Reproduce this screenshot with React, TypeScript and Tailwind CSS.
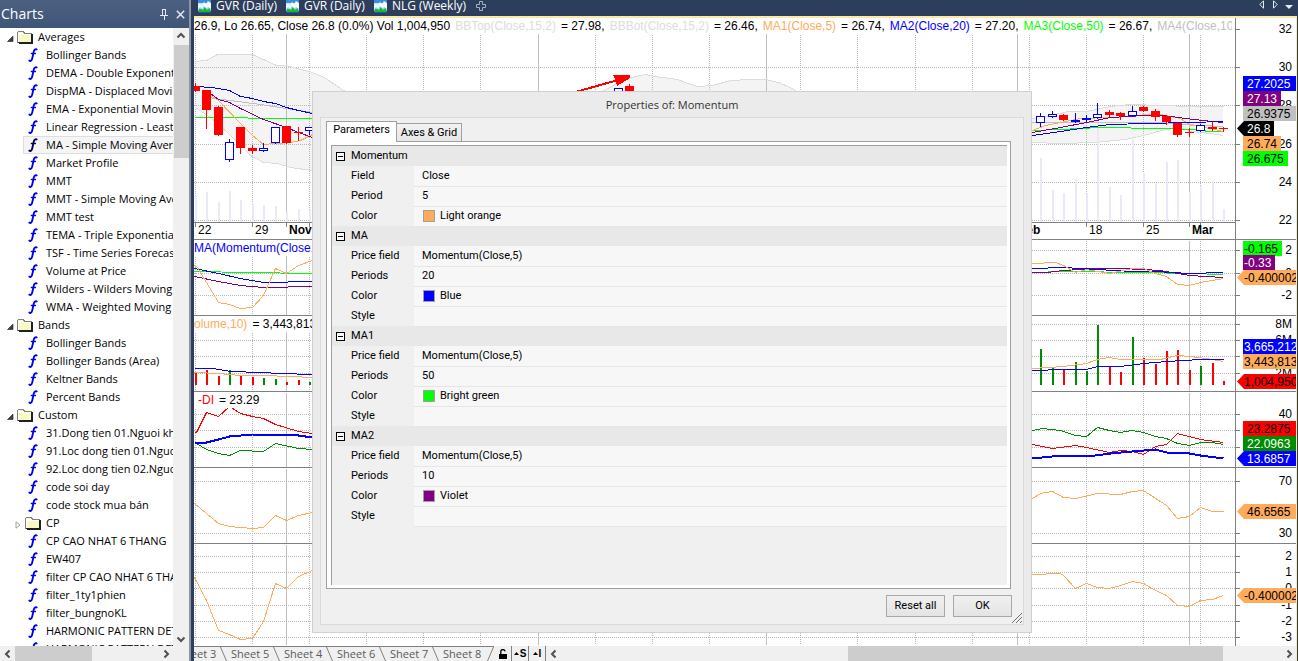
import React from "react";

type Series = { color: string; width?: number; points: string };
type Bar = [x: number, top: number, color?: string];
type Tag = { y: number; text: string; look: string; arrow?: boolean };
type AxisLabel = { y: number; text: string };
type LegendPart = { text: string; look: string };

type Pane = {
  name: string;
  top: number;
  height: number;
  size: string;
  grid: number[];
  labels: AxisLabel[];
  tags: Tag[];
  series: Series[];
  legend: LegendPart[];
};

const PLOT_LEFT = 194;
const PLOT_WIDTH = 1042;

const WEEK_LINES = [195, 252, 309, 366, 423, 480, 595, 652, 709, 800, 857, 915, 972, 1029, 1086, 1143, 1200];
const MONTH_LINES = [286, 538, 766, 1017, 1189];

const ORANGE = "#ffab5c";
const BLUE = "#0000ff";
const GREEN = "#00ff00";
const VIOLET = "#800080";
const DARK_GREEN = "#008c00";
const RED = "#ff0000";

const PANES: Pane[] = [
  {
    name: "Price",
    top: 18,
    height: 222,
    size: "h-[222px] shrink-0",
    grid: [67, 105, 144, 182, 220],
    labels: [
      { y: 29, text: "32" },
      { y: 67, text: "30" },
      { y: 105, text: "28" },
      { y: 144, text: "26" },
      { y: 182, text: "24" },
      { y: 220, text: "22" },
    ],
    tags: [
      { y: 76, text: "27.2025", look: "bg-[#0000ff] text-white pl-1 pr-1" },
      { y: 91, text: "27.13", look: "bg-[#800080] text-white px-1" },
      { y: 106, text: "26.9375", look: "bg-[#c0c0c0] text-black px-1" },
      { y: 121, text: "26.8", look: "bg-black text-white pr-1", arrow: true },
      { y: 136, text: "26.74", look: "bg-[#ffab5c] text-black px-1" },
      { y: 151, text: "26.675", look: "bg-[#00ff00] text-black px-1" },
    ],
    series: [
      { color: "#c0c0c0", points: "206,92 212,98 230,100 260,104 286,108 312,112 1032,122 1160,122 1200,125 1223,126" },
      { color: GREEN, points: "194,117 247,117 248,118 312,118 1032,130 1060,129 1100,127 1160,128 1190,129 1210,131 1223,131" },
      { color: ORANGE, points: "206,92 218,100 240,123 252,135 263,144 275,143 290,142 300,140 312,134 1032,130 1045,125 1060,122 1080,118 1110,117 1130,116 1145,114 1160,114 1170,116 1180,118 1190,125 1200,126 1223,131" },
      { color: VIOLET, points: "206,90 218,99 229,102 240,108 263,119 286,127 298,132 312,137 1032,132 1060,127 1086,122 1110,117 1145,115 1163,115 1185,118 1212,121 1223,122" },
      { color: BLUE, points: "195,86 212,87 229,90 240,96 252,98 263,101 275,103 286,107 298,110 312,113 1032,135 1060,131 1086,127 1110,124 1145,123 1190,122 1223,121" },
    ],
    legend: [
      { text: "26.9, Lo 26.65, Close 26.8 (0.0%) Vol 1,004,950", look: "text-black" },
      { text: "BBTop(Close,15,2)", look: "text-[#dcdcdc]" },
      { text: "= 27.98,", look: "text-black" },
      { text: "BBBot(Close,15,2)", look: "text-[#dcdcdc]" },
      { text: "= 26.46,", look: "text-black" },
      { text: "MA1(Close,5)", look: "text-[#ffab5c]" },
      { text: "= 26.74,", look: "text-black" },
      { text: "MA2(Close,20)", look: "text-[#0000ff]" },
      { text: "= 27.20,", look: "text-black" },
      { text: "MA3(Close,50)", look: "text-[#00ff00]" },
      { text: "= 26.67,", look: "text-black" },
      { text: "MA4(Close,100)", look: "text-[#c0c0c0]" },
    ],
  },
  {
    name: "Momentum averages",
    top: 240,
    height: 76,
    size: "h-[76px] shrink-0",
    grid: [250, 273, 295],
    labels: [
      { y: 250, text: "2" },
      { y: 273, text: "0" },
      { y: 295, text: "-2" },
    ],
    tags: [
      { y: 241, text: "-0.165", look: "bg-[#00ff00] text-black pl-px pr-1" },
      { y: 255, text: "-0.33", look: "bg-[#800080] text-white pl-px pr-1" },
      { y: 270, text: "-0.400002", look: "bg-[#ffab5c] text-black", arrow: true },
    ],
    series: [
      { color: GREEN, points: "194,271 247,272 312,273 1032,272 1063,271 1086,271 1120,272 1143,272 1189,273 1223,274" },
      { color: VIOLET, points: "194,276 218,281 240,285 263,287 312,286 1046,272 1063,270 1097,268 1120,268 1143,269 1160,270 1189,275 1223,277" },
      { color: BLUE, points: "194,268 218,273 240,278 263,282 312,281 1032,268 1063,267 1097,269 1132,271 1155,271 1189,273 1223,272" },
      { color: ORANGE, points: "194,265 197,267 206,282 218,302 229,304 240,308 252,307 263,295 275,268 286,273 298,265 312,260 1032,263 1055,262 1063,265 1075,272 1086,269 1109,273 1132,268 1143,268 1155,273 1166,276 1177,284 1189,285 1200,282 1212,280 1223,278" },
    ],
    legend: [{ text: "MA(Momentum(Close,5),20)", look: "text-[#0000ff]" }],
  },
  {
    name: "Volume",
    top: 316,
    height: 76,
    size: "h-[76px] shrink-0",
    grid: [324, 340, 356, 373],
    labels: [
      { y: 324, text: "8M" },
      { y: 340, text: "6M" },
      { y: 356, text: "4M" },
      { y: 373, text: "2M" },
    ],
    tags: [
      { y: 339, text: "3,665,212", look: "bg-[#0000ff] text-white pl-px" },
      { y: 354, text: "3,443,813", look: "bg-[#ffab5c] text-black pl-px" },
      { y: 374, text: "1,004,950", look: "bg-[#ff0000] text-black", arrow: true },
    ],
    series: [
      { color: ORANGE, points: "194,372 218,373 240,375 263,375 290,376 312,377 1032,368 1063,366 1086,363 1097,359 1109,357 1120,359 1143,359 1160,359 1177,355 1189,356 1205,358 1223,361" },
      { color: BLUE, points: "194,368 212,368 230,371 260,372 280,373 312,374 1032,370 1063,369 1086,369 1097,366 1120,366 1143,363 1166,361 1200,359 1223,359" },
    ],
    legend: [
      { text: "olume,10)", look: "text-[#ffab5c]" },
      { text: "= 3,443,813", look: "text-black" },
    ],
  },
  {
    name: "Directional movement",
    top: 392,
    height: 76,
    size: "h-[76px] shrink-0",
    grid: [414, 430, 447],
    labels: [{ y: 414, text: "40" }],
    tags: [
      { y: 421, text: "23.2875", look: "bg-[#ff0000] text-black px-1" },
      { y: 436, text: "22.0963", look: "bg-[#008c00] text-white px-1" },
      { y: 451, text: "13.6857", look: "bg-[#0000ff] text-white pl-[10px]", arrow: true },
    ],
    series: [
      { color: RED, points: "194,432 196,432 206,412 218,416 229,406 240,413 252,416 263,418 275,424 298,431 312,433 1032,444 1052,448 1075,445 1086,447 1109,452 1120,450 1132,451 1143,454 1155,446 1166,444 1177,433 1200,439 1223,442" },
      { color: DARK_GREEN, points: "196,443 206,449 218,453 229,455 240,450 263,451 275,443 298,448 312,449 1032,430 1042,428 1060,430 1075,435 1086,436 1097,427 1109,430 1120,432 1132,430 1143,432 1155,436 1166,438 1177,443 1189,445 1200,442 1212,442 1223,444" },
      { color: BLUE, width: 2, points: "194,442 206,442 218,439 229,436 252,434 286,434 298,435 312,437 1032,458 1052,456 1095,455 1110,453 1132,451 1155,449 1166,452 1189,453 1200,455 1223,458" },
    ],
    legend: [
      { text: "-DI", look: "pl-1 text-[#ff0000]" },
      { text: "= 23.29", look: "text-black" },
    ],
  },
  {
    name: "Relative strength",
    top: 468,
    height: 76,
    size: "h-[76px] shrink-0",
    grid: [481, 533],
    labels: [
      { y: 481, text: "70" },
      { y: 533, text: "30" },
    ],
    tags: [{ y: 504, text: "46.6565", look: "bg-[#ffab5c] text-black pl-[10px]", arrow: true }],
    series: [
      { color: ORANGE, points: "194,503 206,513 218,523 229,526 252,528 263,527 275,515 286,520 298,515 312,512 1032,498 1040,493 1052,491 1063,497 1075,498 1097,493 1120,494 1132,491 1143,490 1166,505 1177,518 1189,516 1200,507 1212,511 1223,511" },
    ],
    legend: [],
  },
  {
    name: "Momentum",
    top: 544,
    height: 102,
    size: "flex-1",
    grid: [556, 572, 588, 605, 621, 637],
    labels: [
      { y: 556, text: "2" },
      { y: 572, text: "1" },
      { y: 588, text: "0" },
      { y: 605, text: "-1" },
      { y: 621, text: "-2" },
      { y: 637, text: "-3" },
    ],
    tags: [{ y: 588, text: "-0.400002", look: "bg-[#ffab5c] text-black", arrow: true }],
    series: [
      { color: ORANGE, points: "194,577 206,600 218,630 229,634 240,639 252,638 263,621 275,583 286,588 298,576 312,570 1032,574 1060,573 1063,575 1075,588 1086,583 1097,587 1109,588 1120,585 1132,581 1143,583 1155,590 1166,595 1177,605 1189,606 1200,600 1212,599 1223,595" },
    ],
    legend: [],
  },
];

const BAND_TOP =
  "194,61 206,60 217,54 252,54 276,65 286,65 300,69 309,71 324,77 343,90 350,94 600,92 615,84 628,78 635,76 645,74 655,76 677,79 685,82 697,86 712,85 730,80 750,79 765,79 778,82 790,87 800,93 1032,118 1045,116 1068,111 1086,111 1110,106 1130,104 1160,105 1190,106 1223,106";
const BAND_BOTTOM =
  "1223,135 1210,133 1190,131 1180,127 1165,129 1143,135 1125,139 1095,142 1060,143 1032,142 312,170 290,167 277,163 263,162 250,155 240,145 227,132 210,117 195,107";

const PALE_VOLUME: Bar[] = [
  [195, 196], [206, 192], [218, 202], [229, 191], [240, 200], [252, 203], [263, 205], [275, 206], [286, 212],
  [298, 209], [309, 210], [1040, 158], [1052, 190], [1063, 193], [1075, 179], [1086, 194], [1097, 122],
  [1109, 187], [1120, 195], [1132, 139], [1143, 173], [1155, 183], [1166, 162], [1177, 160], [1189, 192],
  [1200, 186], [1212, 181], [1223, 209],
];

const VOLUME: Bar[] = [
  [195, 372, RED], [206, 370, RED], [218, 376, RED], [229, 370, DARK_GREEN], [240, 375, RED], [252, 377, RED],
  [263, 378, DARK_GREEN], [275, 379, DARK_GREEN], [286, 382, RED], [298, 380, RED], [309, 382, DARK_GREEN],
  [1040, 349, DARK_GREEN], [1052, 368, DARK_GREEN], [1063, 369, RED], [1075, 362, DARK_GREEN],
  [1086, 371, DARK_GREEN], [1097, 325, DARK_GREEN], [1109, 366, RED], [1120, 372, RED], [1132, 337, DARK_GREEN],
  [1143, 358, RED], [1155, 364, RED], [1166, 351, RED], [1177, 350, RED], [1189, 370, RED],
  [1200, 366, DARK_GREEN], [1212, 363, RED], [1223, 381, RED],
];

/* x, high, body top, body bottom, low, rising */
const CANDLES: [number, number, number, number, number, boolean][] = [
  [195, 83, 86, 91, 91, false], [206, 90, 90, 110, 128, false], [218, 106, 107, 135, 135, false],
  [229, 139, 142, 160, 161, true], [240, 127, 127, 148, 153, false], [252, 145, 148, 151, 153, false],
  [263, 143, 148, 151, 151, true], [275, 127, 127, 143, 143, true], [286, 126, 126, 143, 143, false],
  [298, 127, 132, 133, 140, false], [309, 127, 127, 131, 134, true], [618, 88, 88, 96, 96, true],
  [629, 84, 86, 96, 96, false], [1040, 113, 116, 123, 126, true], [1052, 111, 114, 117, 117, true],
  [1063, 114, 115, 120, 120, false], [1075, 113, 120, 122, 122, true], [1086, 115, 118, 120, 121, true],
  [1097, 103, 114, 118, 118, true], [1109, 110, 112, 115, 116, false], [1120, 112, 113, 116, 119, false],
  [1132, 106, 111, 116, 116, true], [1143, 106, 107, 111, 111, false], [1155, 109, 111, 117, 120, false],
  [1166, 115, 116, 122, 124, false], [1177, 122, 123, 135, 136, false], [1189, 128, 132, 133, 136, false],
  [1200, 124, 125, 131, 131, true], [1212, 122, 127, 129, 130, false], [1223, 127, 128, 129, 131, false],
];

const DATES: { x: number; text: string; bold?: boolean }[] = [
  { x: 198, text: "22" },
  { x: 255, text: "29" },
  { x: 289, text: "Nov", bold: true },
  { x: 1019, text: "Feb", bold: true },
  { x: 1089, text: "18" },
  { x: 1146, text: "25" },
  { x: 1192, text: "Mar", bold: true },
];

function Plot({ pane }: { pane: Pane }) {
  const bottom = pane.top + pane.height - 1;
  const isPrice = pane.name === "Price";
  const gridEnd = isPrice ? 222 : bottom;
  return (
    <svg
      className="block h-full w-full"
      viewBox={`${PLOT_LEFT} ${pane.top} ${PLOT_WIDTH} ${pane.height}`}
      preserveAspectRatio="none"
      shapeRendering="crispEdges"
      fill="none"
      role="img"
      aria-label={`${pane.name} chart`}
    >
      {isPrice && <polygon points={`${BAND_TOP} ${BAND_BOTTOM}`} fill="#f4f4f4" />}
      {WEEK_LINES.map((x) => (
        <path key={x} d={`M${x + 0.5} ${pane.top + 1}V${gridEnd}`} stroke="#b8b8b8" strokeDasharray="1 1" />
      ))}
      {MONTH_LINES.map((x) => (
        <path key={x} d={`M${x + 0.5} ${pane.top + 1}V${gridEnd}`} stroke="#c0c0c0" />
      ))}
      {pane.grid.map((y) => (
        <path key={y} d={`M194 ${y + 0.5}H1235`} stroke="#b8b8b8" strokeDasharray="1 1" />
      ))}
      {isPrice && (
        <>
          <g transform="translate(.5 .5)" stroke="#dcdcdc">
            <polyline points={BAND_TOP} />
            <polyline points={BAND_BOTTOM} />
          </g>
          {PALE_VOLUME.map(([x, y]) => (
            <rect key={x} x={x} y={y} width="2" height={222 - y} fill="#e9e9f8" />
          ))}
          <path d="M194 222.5H1235" stroke="#808080" />
          {[...WEEK_LINES, ...MONTH_LINES].map((x) => (
            <path key={x} d={`M${x + 0.5} 223V227`} stroke="#808080" />
          ))}
        </>
      )}
      {pane.name === "Volume" &&
        VOLUME.map(([x, y, color]) => <rect key={x} x={x} y={y} width="2" height={385 - y} fill={color} />)}
      <g transform="translate(.5 .5)">
        {pane.series.map((s) => (
          <polyline key={s.points} points={s.points} stroke={s.color} strokeWidth={s.width ?? 1} />
        ))}
      </g>
      {isPrice && (
        <>
          {CANDLES.map(([x, high, open, close, low, rising]) => (
            <g key={x} stroke={rising ? BLUE : RED}>
              <path d={`M${x + 0.5} ${high}V${low + 1}`} />
              <rect
                x={x - 3.5}
                y={open + 0.5}
                width="8"
                height={Math.max(close - open - 1, 0.1)}
                fill={rising ? "#ffffff" : RED}
              />
            </g>
          ))}
          <path d="M572 93L618 80" stroke={RED} strokeWidth="2" />
          <path d="M613 75H630V78L617 86L616 81Z" fill={RED} />
        </>
      )}
      {bottom < 645 && <path d={`M194 ${bottom + 0.5}H1236`} stroke="#808080" />}
      <path d={`M1235.5 ${pane.top}V${bottom + 1}`} stroke="#808080" />
    </svg>
  );
}

function Axis({ pane }: { pane: Pane }) {
  return (
    <div
      className={`relative w-[60px] shrink-0 overflow-hidden bg-white ${
        pane.name === "Momentum" ? "" : "border-b border-[#808080]"
      }`}
    >
      {[...(pane.name === "Price" ? [29] : []), ...pane.grid].map((y) => (
        <i key={y} className="absolute left-0 h-px w-1 bg-[#808080]" style={{ top: y - pane.top }} />
      ))}
      {pane.labels.map((l) => (
        <span key={l.y} className="absolute right-1 h-4 text-xs" style={{ top: l.y - pane.top - 8 }}>
          {l.text}
        </span>
      ))}
      {pane.tags.map((t) => (
        <span
          key={t.y}
          className={`absolute flex h-[15px] items-center text-xs whitespace-nowrap ${t.look} ${
            t.arrow
              ? `left-px [clip-path:polygon(0_50%,7px_0,100%_0,100%_100%,7px_100%)] ${
                  t.text === "26.8" ? "pl-[10px]" : "w-[59px]"
                } ${t.text.length > 8 ? "pl-[7px]" : ""}`
              : "left-[7px]"
          } ${!t.arrow && t.text.length > 6 ? "right-0" : ""}`}
          style={{ top: t.y - pane.top }}
        >
          {t.text}
        </span>
      ))}
    </div>
  );
}

function ChartPane({ pane }: { pane: Pane }) {
  return (
    <section className={`relative flex min-h-0 ${pane.size}`} aria-label={pane.name}>
      <div className="relative min-w-0 flex-1 overflow-hidden">
        <Plot pane={pane} />
        {pane.legend.length > 0 && (
          <div className="absolute top-0 right-1 left-0 overflow-hidden text-xs whitespace-nowrap">
            <p className="inline-flex h-4 gap-[5px] bg-white">
              {pane.legend.map((part) => (
                <span key={part.text} className={part.look}>
                  {part.text}
                </span>
              ))}
            </p>
          </div>
        )}
        {pane.name === "Price" &&
          DATES.map((d) => (
            <span
              key={d.x}
              className={`absolute bottom-[2px] text-xs ${d.bold ? "font-bold" : ""}`}
              style={{ left: `${((d.x - PLOT_LEFT) / PLOT_WIDTH) * 100}%` }}
            >
              {d.text}
            </span>
          ))}
      </div>
      <Axis pane={pane} />
    </section>
  );
}

type Node = { text: string; kind?: "open" | "closed"; selected?: boolean };

const TREE: Node[] = [
  { text: "Averages", kind: "open" },
  { text: "Bollinger Bands" },
  { text: "DEMA - Double Exponential" },
  { text: "DispMA - Displaced Moving" },
  { text: "EMA - Exponential Moving" },
  { text: "Linear Regression - Least" },
  { text: "MA - Simple Moving Average", selected: true },
  { text: "Market Profile" },
  { text: "MMT" },
  { text: "MMT - Simple Moving Average" },
  { text: "MMT test" },
  { text: "TEMA - Triple Exponential" },
  { text: "TSF - Time Series Forecast" },
  { text: "Volume at Price" },
  { text: "Wilders - Wilders Moving" },
  { text: "WMA - Weighted Moving" },
  { text: "Bands", kind: "open" },
  { text: "Bollinger Bands" },
  { text: "Bollinger Bands (Area)" },
  { text: "Keltner Bands" },
  { text: "Percent Bands" },
  { text: "Custom", kind: "open" },
  { text: "31.Dong tien 01.Nguoi khong" },
  { text: "91.Loc dong tien 01.Nguoi" },
  { text: "92.Loc dong tien 02.Nguoi" },
  { text: "code soi day" },
  { text: "code stock mua bán" },
  { text: "CP", kind: "closed" },
  { text: "CP CAO NHAT 6 THANG" },
  { text: "EW407" },
  { text: "filter CP CAO NHAT 6 THANG" },
  { text: "filter_1ty1phien" },
  { text: "filter_bungnoKL" },
  { text: "HARMONIC PATTERN DETECT" },
  { text: "HARMONIC PATTERN DETECT" },
];

function FormulaIcon({ dark }: { dark?: boolean }) {
  return (
    <svg className="h-[14px] w-[10px] shrink-0" viewBox="0 0 10 14" fill="none" stroke={dark ? "#000050" : "#0000e6"}>
      <path d="M9 2.2C8.2.6 6.3 1.2 5.8 3.4L4.2 10.6C3.7 12.9 2 13.6.8 12.2" strokeWidth="1.9" />
      <path d="M2.8 5.5H8" strokeWidth="1.4" />
    </svg>
  );
}

function FolderIcon() {
  return (
    <svg className="h-[14px] w-4 shrink-0" viewBox="0 0 16 14" shapeRendering="crispEdges">
      <path d="M.5 12.5V2.5L1.5 1.5H6.5L7.5 3.5H14.5V12.5Z" fill="#fafac4" stroke="#808080" />
      <path d="M1 3.5H6.5M1 4.5H14M1.5 4V12" stroke="#fff" />
      <path d="M14.5 4V12.5H1M15.5 4V13.5H2" fill="none" stroke="#202020" />
    </svg>
  );
}

function TreeRow({ node }: { node: Node }) {
  if (node.kind) {
    const open = node.kind === "open";
    return (
      <li className={`flex h-[18px] items-center ${open ? "pl-[7px]" : "pl-[15px]"}`}>
        <svg className="mt-1 h-2 w-[7px] shrink-0" viewBox="0 0 7 8">
          {open ? (
            <path d="M6 1V6.5H.5Z" fill="#404040" stroke="#202020" strokeWidth=".6" />
          ) : (
            <path d="M1 .8L5 4L1 7.2Z" fill="#fff" stroke="#a0a0a0" />
          )}
        </svg>
        <span className="ml-[3px] flex">
          <FolderIcon />
        </span>
        <span className="ml-[5px]">{node.text}</span>
      </li>
    );
  }
  return (
    <li
      className={`ml-[23px] flex h-[18px] items-center border whitespace-nowrap ${
        node.selected ? "border-r-0 border-[#dedede] bg-[#f5f5f5]" : "border-transparent"
      }`}
    >
      <span className="ml-1 flex">
        <FormulaIcon dark={node.selected} />
      </span>
      <span className="ml-2">{node.text}</span>
    </li>
  );
}

const CHEVRONS = {
  up: "M1.5 6.5L5 3L8.5 6.5",
  down: "M1.5 3.5L5 7L8.5 3.5",
  left: "M6.5 1.5L3 5L6.5 8.5",
  right: "M3.5 1.5L7 5L3.5 8.5",
};

function ScrollButton({ dir, label }: { dir: keyof typeof CHEVRONS; label: string }) {
  return (
    <button type="button" aria-label={label} className="flex size-[15px] shrink-0 items-center justify-center">
      <svg className="size-[10px]" viewBox="0 0 10 10" fill="none" stroke="#505050" strokeWidth="2">
        <path d={CHEVRONS[dir]} />
      </svg>
    </button>
  );
}

function Sidebar() {
  return (
    <aside className="flex w-[191px] shrink-0 flex-col border-r-2 border-[#8c95a6] bg-white">
      <header className="flex h-7 shrink-0 items-center bg-linear-to-b from-[#4d6082] to-[#3f5578] pr-1 pl-px text-white">
        <h2 className="flex-1 text-sm">Charts</h2>
        <button type="button" aria-label="Pin panel" className="mr-2 flex">
          <svg className="h-[11px] w-2" viewBox="0 0 8 11" fill="none" stroke="#e4e8ef" shapeRendering="crispEdges">
            <path d="M2.5 6V.5H5.5V6M5 .5V6M0 6.5H8M4 7V11" />
          </svg>
        </button>
        <button type="button" aria-label="Close panel" className="flex">
          <svg className="size-[9px]" viewBox="0 0 9 9" stroke="#e4e8ef" strokeWidth="1.5">
            <path d="M.8.8L8.2 8.2M8.2.8L.8 8.2" />
          </svg>
        </button>
      </header>
      <div className="flex min-h-0 flex-1">
        <ul className="min-w-0 flex-1 overflow-hidden text-[11px] leading-4 text-black">
          {TREE.map((node, i) => (
            <TreeRow key={i} node={node} />
          ))}
        </ul>
        <div className="flex w-4 shrink-0 flex-col items-center bg-[#f0f0f0]">
          <ScrollButton dir="up" label="Scroll up" />
          <div className="mt-[2px] ml-px h-[113px] w-[15px] bg-[#cdcdcd]" />
          <div className="flex-1" />
          <ScrollButton dir="down" label="Scroll down" />
        </div>
      </div>
      <div className="flex h-[15px] shrink-0 bg-[#f0f0f0]">
        <ScrollButton dir="left" label="Scroll left" />
        <div className="w-[77px] bg-[#cdcdcd]" />
        <div className="flex-1" />
        <ScrollButton dir="right" label="Scroll right" />
        <div className="w-4" />
      </div>
    </aside>
  );
}

function ChartIcon() {
  return (
    <svg className="h-[13px] w-[13px]" viewBox="0 0 13 13">
      <rect width="13" height="13" fill="#cfe8fb" />
      <rect width="13" height="3" fill="#3a8fd8" />
      <path d="M0 6L2 4L4 6L6 2L8 4L10 1L13 3V9H0Z" fill="#f4fbff" />
      <path d="M0 9L2 7L4 9L6 6L8 9L10 7L13 9V13H0Z" fill="#8ccdf0" />
      <path d="M0 11H13V13H0Z" fill="#2458b0" />
      <path d="M1 12V9H3L5 10L7 7L9 10L12 8V12Z" fill="#18b82c" />
    </svg>
  );
}

function DocumentTabs() {
  return (
    <nav className="flex h-4 shrink-0 items-start overflow-hidden bg-[#2d3e5c] pl-1 text-xs leading-3 text-white">
      {["GVR (Daily)", "GVR (Daily)", "NLG (Weekly)"].map((name, i) => (
        <button key={i} type="button" className="mr-[9px] flex gap-[5px]">
          <ChartIcon />
          {name}
        </button>
      ))}
      <button type="button" aria-label="New chart" className="flex">
        <svg className="size-3" viewBox="0 0 12 12" fill="none" stroke="#a5b0c2">
          <path d="M4.5 1.5H7.5V4.5H10.5V7.5H7.5V10.5H4.5V7.5H1.5V4.5H4.5Z" />
        </svg>
      </button>
      <div className="flex-1" />
      <button type="button" aria-label="Previous tab" className="mr-[9px] flex">
        <svg className="h-[9px] w-[5px]" viewBox="0 0 5 9" fill="none" stroke="#e8ecf2">
          <path d="M4.5.8V8.2L.8 4.5Z" />
        </svg>
      </button>
      <button type="button" aria-label="Next tab" className="mr-[7px] flex">
        <svg className="h-[9px] w-[5px]" viewBox="0 0 5 9" fill="none" stroke="#e8ecf2">
          <path d="M.5.8V8.2L4.2 4.5Z" />
        </svg>
      </button>
      <button type="button" aria-label="Tab list" className="mr-1 flex pt-[5px]">
        <svg className="h-1 w-2" viewBox="0 0 8 4" fill="#e8ecf2">
          <path d="M0 0H8L4 4Z" />
        </svg>
      </button>
    </nav>
  );
}

function Slash({ forward }: { forward?: boolean }) {
  return (
    <svg className="h-[14px] w-[7px] shrink-0" viewBox="0 0 7 14" fill="none" stroke="#808080">
      <path d={forward ? "M.5 14L6.5 0" : "M.5 0L6.5 14"} />
    </svg>
  );
}

function SheetBar() {
  return (
    <footer className="flex h-[15px] shrink-0 bg-[#f0f0f0] text-[11px] text-[#5a5a5a]">
      <div className="flex w-[300px] shrink-0 items-center overflow-hidden border-t border-[#808080] leading-[14px]">
        <button type="button" className="-ml-4 w-[38px] whitespace-nowrap">
          Sheet 3
        </button>
        {["Sheet 5", "Sheet 4", "Sheet 6", "Sheet 7", "Sheet 8"].map((name) => (
          <React.Fragment key={name}>
            <span className="ml-1 flex">
              <Slash />
            </span>
            <button type="button" className="ml-1 w-[38px] whitespace-nowrap">
              {name}
            </button>
          </React.Fragment>
        ))}
        <span className="ml-[6px] flex">
          <Slash forward />
        </span>
      </div>
      <button type="button" aria-label="Unlock" className="flex w-[18px] items-center justify-center border-r border-[#808080]">
        <svg className="h-[10px] w-2" viewBox="0 0 8 10">
          <rect y="5" width="8" height="5" fill="#000" />
          <path d="M1.8 5V2.8A2 2 0 0 1 6 2.4" fill="none" stroke="#000" strokeWidth="1.3" />
        </svg>
      </button>
      {["S", "I"].map((letter) => (
        <button
          key={letter}
          type="button"
          className="flex w-[17px] items-center justify-center gap-px border-r border-[#808080] font-['Liberation_Sans',Arial,sans-serif] text-[10px] font-bold text-black"
        >
          <svg className="h-[3px] w-[5px]" viewBox="0 0 5 3">
            <path d="M0 3L2.5 0L5 3Z" />
          </svg>
          {letter}
        </button>
      ))}
      <div className="flex flex-1">
        <ScrollButton dir="left" label="Scroll chart left" />
        <div className="flex-1" />
        <div className="w-1/2 bg-[#cdcdcd]" />
        <div className="w-[58px]" />
        <ScrollButton dir="right" label="Scroll chart right" />
      </div>
    </footer>
  );
}

type Row = { name: string; value: string; swatch?: string };

const GROUPS: { name: string; rows: Row[] }[] = [
  {
    name: "Momentum",
    rows: [
      { name: "Field", value: "Close" },
      { name: "Period", value: "5" },
      { name: "Color", value: "Light orange", swatch: "bg-[#ffab5c]" },
    ],
  },
  {
    name: "MA",
    rows: [
      { name: "Price field", value: "Momentum(Close,5)" },
      { name: "Periods", value: "20" },
      { name: "Color", value: "Blue", swatch: "bg-[#0000ff]" },
      { name: "Style", value: "" },
    ],
  },
  {
    name: "MA1",
    rows: [
      { name: "Price field", value: "Momentum(Close,5)" },
      { name: "Periods", value: "50" },
      { name: "Color", value: "Bright green", swatch: "bg-[#00ff00]" },
      { name: "Style", value: "" },
    ],
  },
  {
    name: "MA2",
    rows: [
      { name: "Price field", value: "Momentum(Close,5)" },
      { name: "Periods", value: "10" },
      { name: "Color", value: "Violet", swatch: "bg-[#800080]" },
      { name: "Style", value: "" },
    ],
  },
];

function PropertyTable() {
  return (
    <table className="w-full table-fixed text-left text-[11px] leading-4 text-black">
      <colgroup>
        <col className="w-[82px]" />
        <col />
      </colgroup>
      {GROUPS.map((group) => (
        <tbody key={group.name}>
          <tr className="h-5 bg-[#e8e8e8]">
            <th colSpan={2} className="p-0 font-normal">
              <span className="flex items-center gap-[6px] pl-1">
                <button
                  type="button"
                  aria-label={`Collapse ${group.name}`}
                  className="flex size-[9px] items-center justify-center border border-black bg-white"
                >
                  <i className="h-px w-[5px] bg-black" />
                </button>
                {group.name}
              </span>
            </th>
          </tr>
          {group.rows.map((row) => (
            <tr key={row.name} className="h-5">
              <th className="p-0 pl-[19px] font-normal">{row.name}</th>
              <td className="border-b border-[#e6e6e6] bg-[#f7f7f7] p-0 pl-2">
                <span className="flex items-center gap-[5px]">
                  {row.swatch && <i className={`ml-px size-3 border border-[#a0a0a0] ${row.swatch}`} />}
                  {row.value}
                </span>
              </td>
            </tr>
          ))}
        </tbody>
      ))}
    </table>
  );
}

function PropertiesDialog() {
  return (
    <div
      role="dialog"
      aria-labelledby="dialog-title"
      className="absolute top-[91px] left-[312px] flex w-[720px] flex-col border border-[#d0d0d0] bg-[#ebebeb] px-[7px] pb-[7px]"
    >
      <h1 id="dialog-title" className="h-[25px] text-center text-[11px] leading-[26px] text-[#333]">
        Properties of: Momentum
      </h1>
      <div className="relative border border-[#dadada] bg-[#f0f0f0] px-[5px] pt-[3px] pb-[7px] font-['Roboto','Open_Sans',sans-serif]">
        <div role="tablist" className="flex items-end text-[11px] text-black">
          <button
            type="button"
            role="tab"
            aria-selected="true"
            className="relative z-10 -mb-px h-[21px] w-[71px] border border-b-0 border-[#a0a0a0] bg-white pb-1 leading-4 whitespace-nowrap"
          >
            Parameters
          </button>
          <button
            type="button"
            role="tab"
            aria-selected="false"
            className="-ml-px h-[18px] w-[66px] border border-b-0 border-[#a0a0a0] bg-linear-to-b from-[#f2f2f2] to-[#e6e6e6] leading-[18px] whitespace-nowrap"
          >
            Axes &amp; Grid
          </button>
        </div>
        <div role="tabpanel" className="mr-[7px] border border-[#a0a0a0] bg-white p-[3px] pl-1">
          <div className="min-h-[440px] border-t border-l border-t-[#a0a0a0] border-l-[#a0a0a0] bg-[#f0f0f0]">
            <PropertyTable />
          </div>
        </div>
        <div className="mt-[6px] mr-[6px] flex justify-end gap-2 text-[11px] text-black">
          <button
            type="button"
            className="h-[22px] w-[59px] border border-[#a8a8a8] bg-linear-to-b from-[#f0f0f0] to-[#e4e4e4] leading-5 whitespace-nowrap"
          >
            Reset all
          </button>
          <button
            type="button"
            className="h-[22px] w-[59px] border border-[#a8a8a8] bg-linear-to-b from-[#f0f0f0] to-[#e4e4e4] leading-5"
          >
            OK
          </button>
        </div>
        <svg className="absolute right-0 bottom-0 size-3" viewBox="0 0 12 12" stroke="#707070">
          <path d="M1 11L11 1M5 11L11 5M9 11L11 9" />
        </svg>
      </div>
    </div>
  );
}

export default function App() {
  return (
    <div className="relative flex h-screen overflow-hidden bg-[#2d3e5c] pr-px font-['Open_Sans','Noto_Sans',sans-serif]">
      <Sidebar />
      <main className="ml-[3px] flex min-w-0 flex-1 flex-col">
        <DocumentTabs />
        <div className="flex min-h-0 flex-1 flex-col border-t-2 border-r border-[#ffe8a6] bg-white">
          <div className="flex min-h-0 flex-1 flex-col bg-white font-['Liberation_Sans',Arial,sans-serif] text-black">
            {PANES.map((pane) => (
              <ChartPane key={pane.name} pane={pane} />
            ))}
          </div>
          <SheetBar />
        </div>
      </main>
      <PropertiesDialog />
    </div>
  );
}
